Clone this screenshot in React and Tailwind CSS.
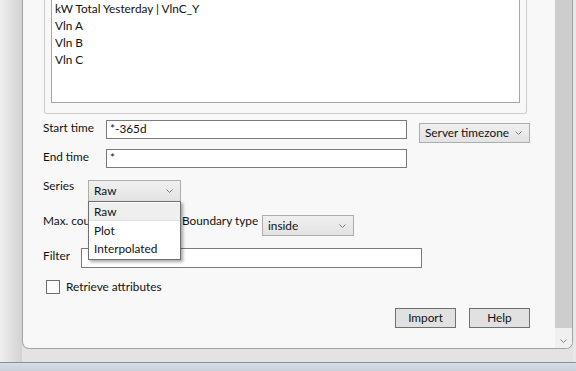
import React from 'react'

const font = { fontFamily: 'Lato, "Liberation Sans", sans-serif' }

function Chevron({ className = '' }) {
  return (
    <svg width="7" height="4" viewBox="0 0 7 4" className={className}>
      <path d="M0.5 0.5 L3.5 3.5 L6.5 0.5" fill="none" stroke="#7c7c7c" strokeWidth="1" />
    </svg>
  )
}

function Combo({ label, className = '' }) {
  return (
    <div className={`flex items-center justify-between border border-[#adadad] bg-gradient-to-b from-[#f0f0f0] to-[#e3e3e3] pl-[5px] pr-[7px] ${className}`}>
      <span>{label}</span>
      <Chevron />
    </div>
  )
}

function TextBox({ value = '', className = '' }) {
  return (
    <div className={`border border-[#7a7a7a] bg-white pl-[3px] leading-[15px] ${className}`}>{value}</div>
  )
}

function Btn({ children }) {
  return (
    <div className="w-[61px] h-[20px] border border-[#707070] bg-[#e1e1e1] flex items-center justify-center">{children}</div>
  )
}

export default function App() {
  const items = ['kW Total Yesterday | VlnC_Y', 'Vln A', 'Vln B', 'Vln C']
  return (
    <div className="relative w-[576px] h-[371px] overflow-hidden flex flex-col bg-[#e3e3e3] text-[11.8px] text-[#111]" style={font}>
      <div className="flex h-[362px]">
        <div className="w-[22px] h-full bg-gradient-to-r from-[#efefef] to-[#d2d2d2]" />
        <div className="w-[551px] h-[349px] flex bg-[#f8f8f8] border-l border-r border-b border-[#a3a3a3] rounded-b-[7px] overflow-hidden">
          <div className="flex-1 flex flex-col">
            {/* group box with list */}
            <div className="ml-[21px] w-[483px] border-x border-b border-[#cdcdcd] rounded-b-[3px] px-[6px] pb-[10px]">
              <div className="h-[103px] border-x border-b border-[#a5a5a5] bg-white pl-[3px]">
                {items.map((t) => (
                  <div key={t} className="h-[17px] leading-[17px] whitespace-nowrap">{t}</div>
                ))}
              </div>
            </div>

            <div className="ml-[20px] flex flex-col">
              {/* start time */}
              <div className="mt-[6px] h-[23px] flex items-start">
                <div className="w-[63px] leading-[16px]">Start time</div>
                <TextBox value="*-365d" className="w-[301px] h-[19px]" />
                <Combo label="Server timezone" className="ml-[12px] mt-[3px] w-[111px] h-[20px]" />
              </div>
              {/* end time */}
              <div className="mt-[6px] h-[19px] flex items-start">
                <div className="w-[63px] leading-[16px]">End time</div>
                <TextBox value="*" className="w-[301px] h-[19px]" />
              </div>
              {/* series */}
              <div className="mt-[12px] h-[22px] flex items-start">
                <div className="w-[45px] leading-[12px]">Series</div>
                <Combo label="Raw" className="w-[93px] h-[22px]" />
              </div>
              {/* max count / boundary */}
              <div className="mt-[13px] h-[21px] flex items-start">
                <div className="w-[72px] leading-[12px] whitespace-nowrap">Max. count</div>
                <TextBox value="" className="w-[60px] h-[20px]" />
                <div className="ml-[7px] w-[80px] leading-[12px] whitespace-nowrap">Boundary type</div>
                <Combo label="inside" className="w-[92px] h-[21px]" />
              </div>
              {/* filter */}
              <div className="mt-[12px] h-[20px] flex items-start">
                <div className="w-[38px] leading-[16px]">Filter</div>
                <TextBox value="" className="w-[341px] h-[20px]" />
              </div>
              {/* checkbox */}
              <div className="mt-[12px] ml-[3px] h-[14px] flex items-center">
                <div className="w-[14px] h-[14px] border border-[#6e6e6e] bg-[#fbfbfb]" />
                <span className="ml-[6px] leading-[14px]">Retrieve attributes</span>
              </div>
              {/* buttons */}
              <div className="mt-[14px] ml-[352px] flex gap-[13px]">
                <Btn>Import</Btn>
                <Btn>Help</Btn>
              </div>
            </div>
          </div>
          {/* scrollbar */}
          <div className="w-[17px] flex flex-col bg-[#f0f0f0]">
            <div className="h-[328px] bg-[#cdcdcd]" />
            <div className="flex-1 flex items-start justify-center pt-[11px]">
              <Chevron />
            </div>
          </div>
        </div>
        <div className="flex-1 bg-[#e8e8e8]" />
      </div>
      <div className="h-[9px] border-t border-[#8a9099] bg-gradient-to-b from-[#d8dde4] to-[#c9d0da]" />

      {/* open dropdown list */}
      <div className="absolute left-[88px] top-[201px] w-[93px] h-[59px] border border-[#707070] bg-white shadow-[2px_2px_3px_rgba(0,0,0,0.35)] flex flex-col py-[1px]">
        <div className="h-[18px] leading-[18px] pl-[5px] bg-[#efefef] border-b border-[#e2e2e2]">Raw</div>
        <div className="h-[19px] leading-[19px] pl-[5px]">Plot</div>
        <div className="h-[18px] leading-[18px] pl-[5px]">Interpolated</div>
      </div>
    </div>
  )
}
